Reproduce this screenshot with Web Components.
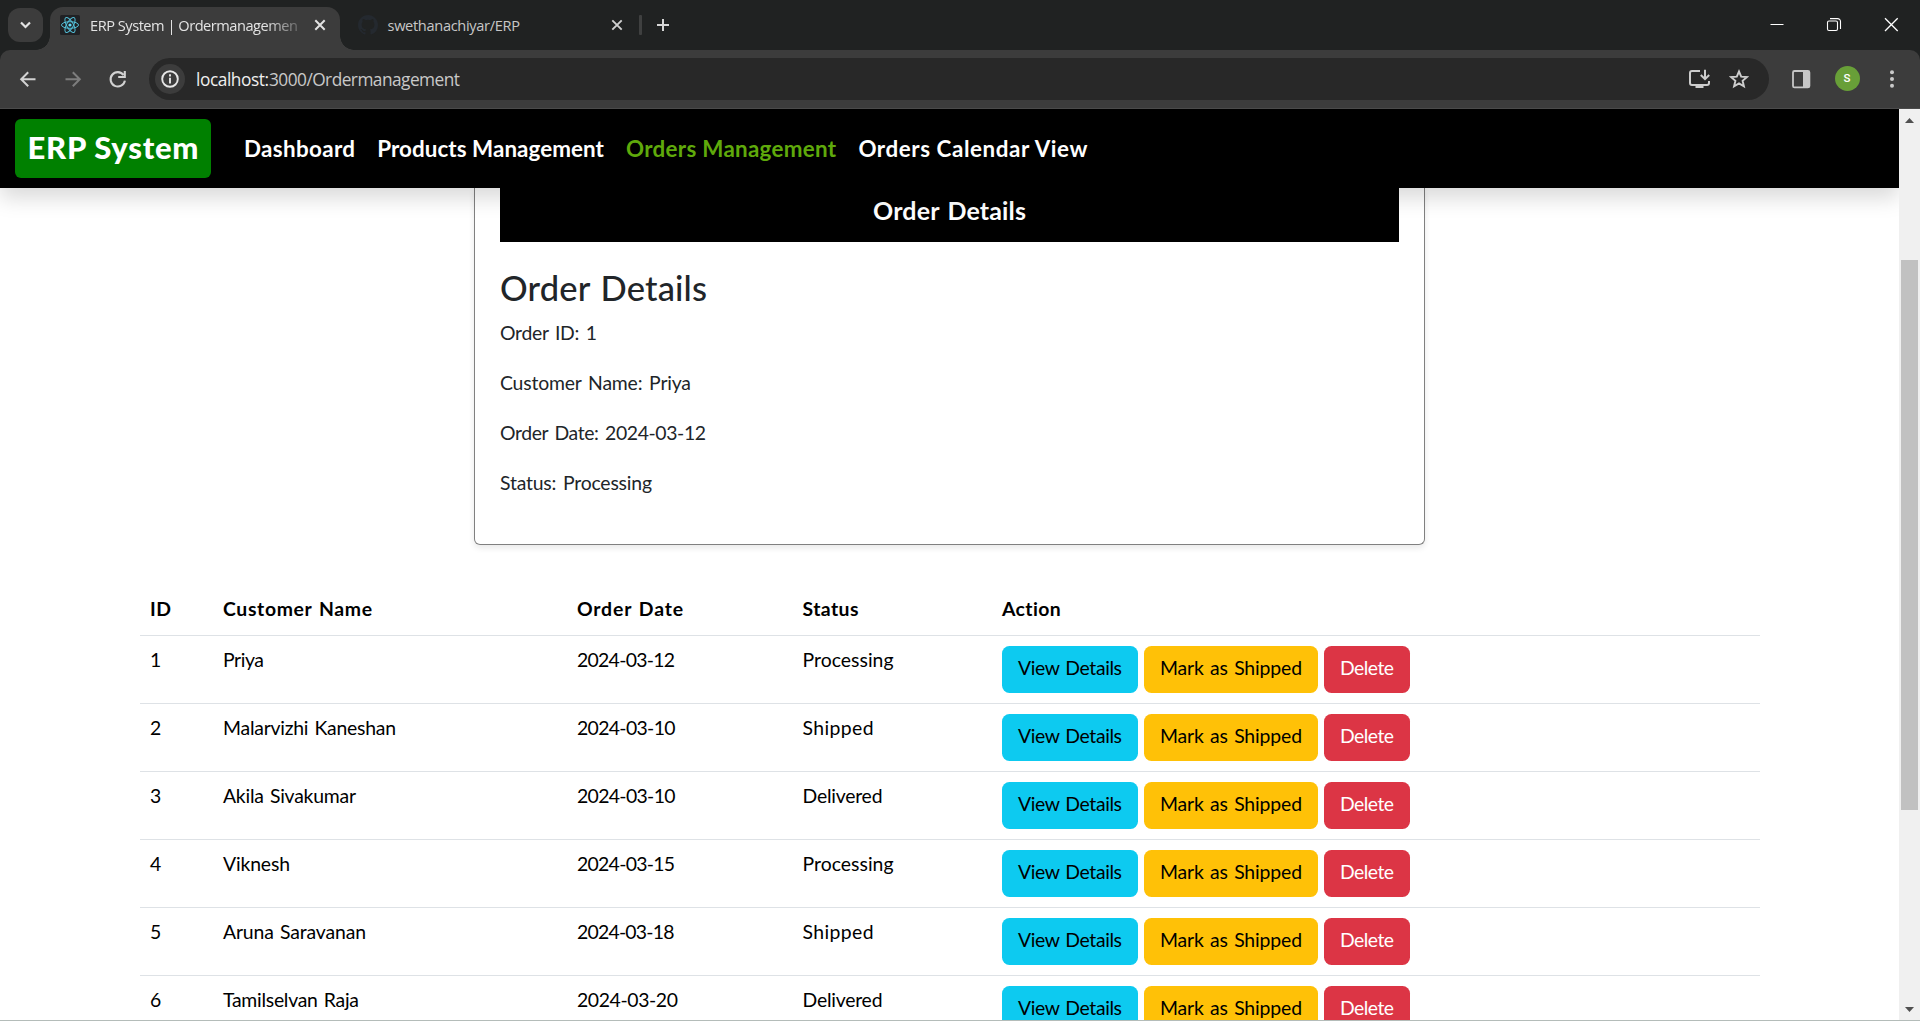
<!DOCTYPE html>
<html lang="en">
<head>
<meta charset="utf-8">
<title>ERP System | Ordermanagement</title>
<style>
html,body{margin:0;height:100%;overflow:hidden;background:#fff}
</style>
</head>
<body>
<erp-window></erp-window>
<script>
const define = (name, html, after) => {
  const t = document.createElement('template');
  t.innerHTML = html;
  customElements.define(name, class extends HTMLElement {
    connectedCallback() {
      if (this.shadowRoot) return;
      this.attachShadow({mode: 'open'}).append(t.content.cloneNode(true));
      if (after) after(this, this.shadowRoot);
    }
  });
};

/* Text tracked so that it fills a given width. */
define('fit-text', `<style>:host{display:inline-block;white-space:pre;text-align:left;flex:none}span{display:inline-block}</style><span><slot></slot></span>`,
  (el, root) => {
    const w = +el.getAttribute('w'), s = root.querySelector('span');
    const n = el.textContent.length;
    el.style.width = w + 'px';
    if (n > 1) s.style.letterSpacing = ((w - s.getBoundingClientRect().width) / (n - 1)).toFixed(3) + 'px';
  });

define('tab-strip', `<style>
:host{display:flex;height:50px;background:#202222;font:14.6px/20px "Open Sans","Noto Sans",sans-serif;color:#e3e3e3;box-sizing:border-box;padding-left:8px}
.search{width:35px;height:34px;margin-top:8px;border-radius:12px;background:#3c3c3c;flex:none}
.tab{position:relative;display:flex;align-items:center;height:43px;margin:7px 0 0 7px;width:290px;box-sizing:border-box;padding:0 13px 7px 10px;background:#3c3c3c;border-radius:13px 13px 0 0}
.tab:before,.tab:after{content:"";position:absolute;bottom:0;width:14px;height:14px}
.tab:before{left:-14px;background:radial-gradient(circle at 0 0,transparent 13.5px,#3c3c3c 14px)}
.tab:after{right:-14px;background:radial-gradient(circle at 100% 0,transparent 13.5px,#3c3c3c 14px)}
.tab fit-text{margin-left:10px;-webkit-mask:linear-gradient(90deg,#000 175px,#0004 208px);mask:linear-gradient(90deg,#000 175px,#0004 208px)}
.tab .x,.idle .x{margin-left:auto}
.idle{display:flex;align-items:center;height:36px;margin-top:7px;margin-left:18px;width:266px;color:#c7c7c7}
.idle fit-text{margin-left:9.5px}
.sep{width:3px;height:20px;margin:15px 0 0 15px;background:#3f4040;border-radius:1px}
.plus{margin:15px 0 0 11px}
.win{display:flex;margin-left:auto;padding:15px 18px 0 0;gap:37.5px}
svg{display:block;flex:none}
</style>
<div class="search"><svg width="35" height="34" fill="none" stroke="#e3e3e3" stroke-width="2.2"><path d="M13 14.5l4.5 4.5 4.5-4.5"/></svg></div>
<div class="tab">
 <svg width="20" height="20" viewBox="0 0 20 20" fill="none" stroke="#53bfd8" stroke-width="1"><rect width="20" height="20" rx="1.5" fill="#202124" stroke="none"/><ellipse cx="10" cy="10" rx="8.5" ry="3.3"/><ellipse cx="10" cy="10" rx="8.5" ry="3.3" transform="rotate(60 10 10)"/><ellipse cx="10" cy="10" rx="8.5" ry="3.3" transform="rotate(120 10 10)"/><circle cx="10" cy="10" r="1.6" fill="#61dafb" stroke="none"/></svg>
 <fit-text w="208">ERP System | Ordermanagemen</fit-text>
 <svg class="x" width="14" height="14" fill="none" stroke="#e3e3e3" stroke-width="2"><path d="M2.3 2.3l9.4 9.4M11.7 2.3l-9.4 9.4"/></svg>
</div>
<div class="idle">
 <svg width="20" height="20" viewBox="0 0 16 16" fill="#24292f"><path d="M8 0C3.58 0 0 3.58 0 8c0 3.54 2.29 6.53 5.47 7.59.4.07.55-.17.55-.38 0-.19-.01-.82-.01-1.49-2.01.37-2.53-.49-2.69-.94-.09-.23-.48-.94-.82-1.13-.28-.15-.68-.52-.01-.53.63-.01 1.08.58 1.23.82.72 1.21 1.87.87 2.33.66.07-.52.28-.87.51-1.07-1.78-.2-3.64-.89-3.64-3.95 0-.87.31-1.59.82-2.15-.08-.2-.36-1.02.08-2.12 0 0 .67-.21 2.2.82a7.5 7.5 0 0 1 4 0c1.53-1.04 2.2-.82 2.2-.82.44 1.1.16 1.92.08 2.12.51.56.82 1.27.82 2.15 0 3.07-1.87 3.75-3.65 3.95.29.25.54.73.54 1.48 0 1.07-.01 1.93-.01 2.2 0 .21.15.46.55.38A8 8 0 0 0 16 8c0-4.42-3.58-8-8-8z"/></svg>
 <fit-text w="132.5">swethanachiyar/ERP</fit-text>
 <svg class="x" width="14" height="14" fill="none" stroke="#d0d0d0" stroke-width="1.9"><path d="M2.3 2.3l9.4 9.4M11.7 2.3l-9.4 9.4"/></svg>
</div>
<div class="sep"></div>
<svg class="plus" width="20" height="20" fill="none" stroke="#d6d6d6" stroke-width="2"><path d="M10 4v12M4 10h12"/></svg>
<div class="win">
 <svg width="20" height="20" stroke="#fff"><path d="M3.5 9.5h13"/></svg>
 <svg width="20" height="20" fill="none" stroke="#fff" stroke-width="1.1"><path d="M5 3.6h7.5a3 3 0 0 1 3 3v7.4"/><rect x="2.5" y="6" width="10" height="9.5" rx="1.5"/></svg>
 <svg width="20" height="20" stroke="#fff" stroke-width="1.3"><path d="M3 3.3l12.7 12.7M15.7 3.3L3 16"/></svg>
</div>`);

define('tool-bar', `<style>
:host{display:block;height:59px;background:#202222}
.bar{display:flex;align-items:center;height:59px;box-sizing:border-box;background:#3c3c3c;border-radius:10px 10px 0 0;border-bottom:1px solid #4b4b4b;padding:0 15px 0 15.5px}
svg{display:block;flex:none}
.omni{display:flex;align-items:center;height:42px;width:1620px;box-sizing:border-box;border-radius:21px;background:#282828;margin-left:19.5px;padding:0 20px 0 6px;color:#c9c9c9;font:17.3px/24px "Open Sans","Noto Sans",sans-serif}
.omni fit-text{padding-top:2px}
.info{width:30px;height:30px;border-radius:50%;background:#3c3c3c;margin-right:11px;flex:none}
.host{color:#efefef}
.omni .inst{margin-left:auto;margin-right:18px}
.av{width:25px;height:25px;border-radius:50%;background:#689f38;color:#fff;font:500 11.5px/25px Roboto,sans-serif;text-align:center;margin:0 0 1px 23.5px;flex:none}
</style>
<div class="bar">
<svg width="24" height="24" fill="none" stroke="#d2d2d2" stroke-width="2"><path d="M19.5 12.2H6M12.2 5.2l-7 7 7 7"/></svg>
<svg width="24" height="24" fill="none" stroke="#7d7d7d" stroke-width="2" style="margin-left:21px"><path d="M4.5 12.2H18M11.8 5.2l7 7-7 7"/></svg>
<svg width="24" height="24" fill="none" stroke="#d2d2d2" stroke-width="2.1" style="margin-left:21px"><path d="M17.6 8A7.2 7.2 0 1 0 18.9 13.6"/><path d="M12.2 10h6.6V4"/></svg>
<div class="omni"><div class="info"><svg width="30" height="30" fill="none" stroke="#e6e6e6" stroke-width="1.9"><circle cx="15" cy="15" r="7.8"/><path d="M15 13.8v5.6M15 10.3v2.1"/></svg></div>
<fit-text w="73" class="host">localhost:</fit-text><fit-text w="191">3000/Ordermanagement</fit-text>
<svg class="inst" width="24" height="24" fill="none" stroke="#cdcdcd" stroke-width="2"><path d="M13 4H5a2 2 0 0 0-2 2v10a2 2 0 0 0 2 2h15a2 2 0 0 0 2-2v-2"/><path d="M18 2.8v9M13.8 8l4.2 4.2L22.2 8"/><path d="M8.5 18h8v3h-8z" fill="#cdcdcd" stroke="none"/></svg>
<svg width="20" height="20" fill="none" stroke="#cdcdcd" stroke-width="1.9"><path d="M10 2.5l2.2 5.1 5.6.5-4.2 3.7 1.3 5.5L10 14.4l-4.9 2.9 1.3-5.5-4.2-3.7 5.6-.5z"/></svg></div>
<svg width="20" height="20" style="margin-left:22px"><rect x="2" y="2" width="16.4" height="16.4" rx="1.5" fill="none" stroke="#c7c7c7" stroke-width="1.8"/><path d="M12 2h6v16.5h-6z" fill="#c7c7c7"/></svg>
<div class="av">S</div>
<svg width="20" height="20" fill="#c9c9c9" style="margin-left:22.5px"><circle cx="10" cy="3.2" r="2"/><circle cx="10" cy="10" r="2"/><circle cx="10" cy="16.8" r="2"/></svg>
</div>`);

define('nav-bar', `<style>
:host{display:flex;align-items:center;height:79px;background:#000;color:#fff;position:relative;z-index:1;box-shadow:0 10px 20px rgba(0,0,0,.15);font:700 22.4px/30px Lato,sans-serif;flex:none}
.brand{height:59px;width:196px;box-sizing:border-box;margin-left:15px;border-radius:6px;background:green;display:flex;justify-content:center;align-items:center;padding-bottom:4px;font-size:31px;font-weight:900}
nav{display:flex;margin-left:33px;gap:22.3px}
.on{color:#5fa90b}
</style>
<div class="brand"><fit-text w="171">ERP System</fit-text></div>
<nav><fit-text w="111">Dashboard</fit-text><fit-text w="226.5">Products Management</fit-text><fit-text w="210">Orders Management</fit-text><fit-text w="229">Orders Calendar View</fit-text></nav>`,
(el, root) => root.querySelectorAll('nav fit-text')[2].classList.add('on'));

define('order-card', `<style>
:host{display:block;width:951px;height:357px;box-sizing:border-box;margin-left:474px;border:1px solid #808080;border-top:0;border-radius:0 0 6px 6px;padding:0 25px;box-shadow:0 3px 6px rgba(0,0,0,.09);color:#212529;font:19.4px/30px Lato,sans-serif;word-spacing:2px}
header{display:flex;justify-content:center;height:54px;box-sizing:border-box;padding-top:7px;background:#000;color:#fff;font-weight:700;font-size:25px}
h3{margin:25px 0 9px;font-weight:500;font-size:34.5px;line-height:42px}
p{margin:0 0 20px;height:30px}
fit-text{vertical-align:top}
</style>
<header><fit-text w="153">Order Details</fit-text></header>
<h3><fit-text w="207">Order Details</fit-text></h3>
<p><fit-text w="97">Order ID: 1</fit-text></p>
<p><fit-text w="191">Customer Name: Priya</fit-text></p>
<p><fit-text w="206">Order Date: 2024-03-12</fit-text></p>
<p><fit-text w="152">Status: Processing</fit-text></p>`);

define('order-button', `<style>
:host{display:flex;justify-content:center;box-sizing:border-box;height:47px;border-radius:7.5px;padding-top:7px;background:var(--bg);color:var(--fg,#000);flex:none}
</style><slot></slot>`);

define('order-row', `<style>
:host{display:grid;grid-template-columns:73px 354px 225.5px 199.5px 1fr;height:68px;box-sizing:border-box;border-bottom:1px solid #dee2e6;padding:9px 0 0 10px}
:host([head]){height:51px;font-weight:700}
</style><slot></slot>`);

define('order-table', `<style>
:host{display:block;margin:40px 0 0 140px;width:1620px;font:19.4px/30px Lato,sans-serif;color:#000;word-spacing:1.5px}
.act{display:flex;gap:6px;padding:1px 0 0 0}
</style><order-row head><fit-text w="21">ID</fit-text><fit-text w="149">Customer Name</fit-text><fit-text w="106">Order Date</fit-text><fit-text w="56">Status</fit-text><fit-text w="59">Action</fit-text></order-row>`,
(el, root) => {
  const status = {Processing: 91, Shipped: 71, Delivered: 80};
  const rows = [
    ['Priya', 41, '2024-03-12', 98, 'Processing'],
    ['Malarvizhi Kaneshan', 173, '2024-03-10', 98.5, 'Shipped'],
    ['Akila Sivakumar', 133, '2024-03-10', 98.5, 'Delivered'],
    ['Viknesh', 67, '2024-03-15', 98, 'Processing'],
    ['Aruna Saravanan', 143, '2024-03-18', 97.5, 'Shipped'],
    ['Tamilselvan Raja', 136, '2024-03-20', 101, 'Delivered']
  ];
  const t = document.createElement('template');
  t.innerHTML = rows.map(([name, nw, date, dw, st], i) => `<order-row><span>${i + 1}</span><fit-text w="${nw}">${name}</fit-text><fit-text w="${dw}">${date}</fit-text><fit-text w="${status[st]}">${st}</fit-text><div class="act"><order-button style="--bg:#0dcaf0;width:136px"><fit-text w="104">View Details</fit-text></order-button><order-button style="--bg:#ffc107;width:174px"><fit-text w="142">Mark as Shipped</fit-text></order-button><order-button style="--bg:#dc3545;--fg:#fff;width:86px"><fit-text w="54">Delete</fit-text></order-button></div></order-row>`).join('');
  root.append(t.content);
});

define('scroll-bar', `<style>
:host{display:flex;flex-direction:column;align-items:center;justify-content:space-between;width:21px;background:#f0f0f0;flex:none;box-sizing:border-box;padding:9px 0 8px}
.thumb{width:17px;height:550px;background:#c1c1c1;margin:137px 0 auto}
svg{display:block}
</style>
<svg width="9" height="5" fill="#505050"><path d="M0 5L4.5 0 9 5z"/></svg>
<div class="thumb"></div>
<svg width="9" height="5" fill="#505050"><path d="M0 0L4.5 5 9 0z"/></svg>`);

define('erp-window', `<style>
:host{display:flex;flex-direction:column;width:1920px;height:1021px;overflow:hidden;box-sizing:border-box;border-bottom:1px solid #b4bcb9}
.view{display:flex;flex:1;min-height:0}
.page{flex:1;min-width:0;overflow:hidden;background:#fff}
tab-strip,tool-bar{flex:none}
</style>
<tab-strip></tab-strip><tool-bar></tool-bar>
<div class="view"><div class="page"><nav-bar></nav-bar><order-card></order-card><order-table></order-table></div><scroll-bar></scroll-bar></div>`);
</script>
</body>
</html>
